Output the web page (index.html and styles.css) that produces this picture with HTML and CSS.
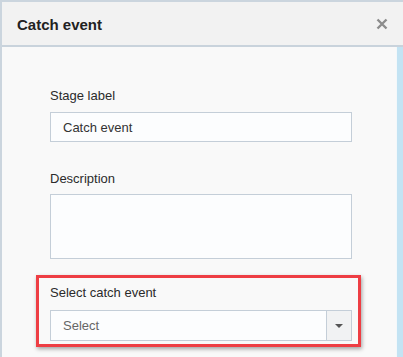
FILE: index.html
```html
<!DOCTYPE html>
<html lang="en">
<head>
  <meta charset="UTF-8">
  <title>Catch event</title>
  <link rel="stylesheet" href="styles.css">
</head>
<body>
  <div class="dialog">
    <div class="dialog-header">
      <h1 class="dialog-title">Catch event</h1>
      <button class="close-btn" aria-label="Close">
        <svg width="12" height="12" viewBox="0 0 12 12">
          <path d="M1.5 1.5 L10.5 10.5 M10.5 1.5 L1.5 10.5" stroke="#8c8c8c" stroke-width="2.4" fill="none"/>
        </svg>
      </button>
    </div>

    <div class="dialog-main">
      <div class="dialog-body">
        <div class="field field-label">
          <label>Stage label</label>
          <input class="text-input" type="text" value="Catch event">
        </div>

        <div class="field field-desc">
          <label>Description</label>
          <textarea class="text-area"></textarea>
        </div>

        <div class="field field-select">
          <label>Select catch event</label>
          <div class="select-box">
            <span class="select-value">Select</span>
            <span class="select-btn"><span class="caret"></span></span>
          </div>
          <div class="highlight"></div>
        </div>
      </div>
      <div class="side-strip"></div>
    </div>
  </div>
</body>
</html>
```

FILE: styles.css
```css
html, body {
  margin: 0;
  height: 100%;
  overflow: hidden;
}

body {
  font-family: "Liberation Sans", Arial, sans-serif;
  background: #f9f9f9;
  color: #333;
}

.dialog {
  height: 100%;
  display: flex;
  flex-direction: column;
  border-top: 2px solid #cbd5de;
  border-left: 2px solid #cbd5de;
  box-sizing: border-box;
}

.dialog-header {
  height: 43px;
  display: flex;
  align-items: center;
  justify-content: space-between;
  background: #f2f2f2;
  border-bottom: 2px solid #c9d3dc;
  padding: 0 15px 0 15px;
  flex-shrink: 0;
}

.dialog-title {
  margin: 0;
  font-size: 15px;
  font-weight: bold;
  color: #222;
  padding-top: 1px;
}

.close-btn {
  border: none;
  background: none;
  padding: 0;
  width: 12px;
  height: 12px;
  display: flex;
  margin-top: 1px;
}

.dialog-main {
  flex: 1;
  display: flex;
}

.dialog-body {
  flex: 1;
  padding: 41px 43px 0 48px;
  background: #f9f9f9;
}

.side-strip {
  width: 6px;
  background: #c3e3f3;
  border-left: 1px solid #f4f8fa;
}

.field {
  display: flex;
  flex-direction: column;
  position: relative;
}

.field label {
  font-size: 13px;
  line-height: 16px;
  color: #2b2b2b;
  margin-bottom: 8px;
}

.field-desc {
  margin-top: 29px;
}

.field-desc label {
  margin-bottom: 7px;
}

.field-select {
  margin-top: 26px;
}

.field-select label {
  margin-bottom: 9px;
}

.text-input,
.text-area,
.select-box {
  box-sizing: border-box;
  width: 302px;
  border: 1px solid #c4ced8;
  background: #fcfdfe;
  font-family: "Liberation Sans", Arial, sans-serif;
  font-size: 13px;
  color: #333;
  margin: 0;
}

.text-input {
  height: 30px;
  padding: 0 12px;
  outline: none;
}

.text-area {
  height: 65px;
  resize: none;
  display: block;
}

.select-box {
  height: 31px;
  display: flex;
  align-items: center;
}

.select-value {
  flex: 1;
  padding-left: 12px;
  color: #666;
}

.select-btn {
  width: 24px;
  height: 100%;
  background: #f1f2f3;
  border-left: 1px solid #c4ced8;
  display: flex;
  align-items: center;
  justify-content: center;
}

.caret {
  width: 0;
  height: 0;
  border-left: 4px solid transparent;
  border-right: 4px solid transparent;
  border-top: 4px solid #555;
}

.highlight {
  position: absolute;
  left: -14px;
  top: -10px;
  width: 325px;
  height: 72px;
  box-sizing: border-box;
  border: 3px solid #ee3e44;
  box-shadow: 1px 2px 4px rgba(0, 0, 0, 0.35);
  pointer-events: none;
}
```
